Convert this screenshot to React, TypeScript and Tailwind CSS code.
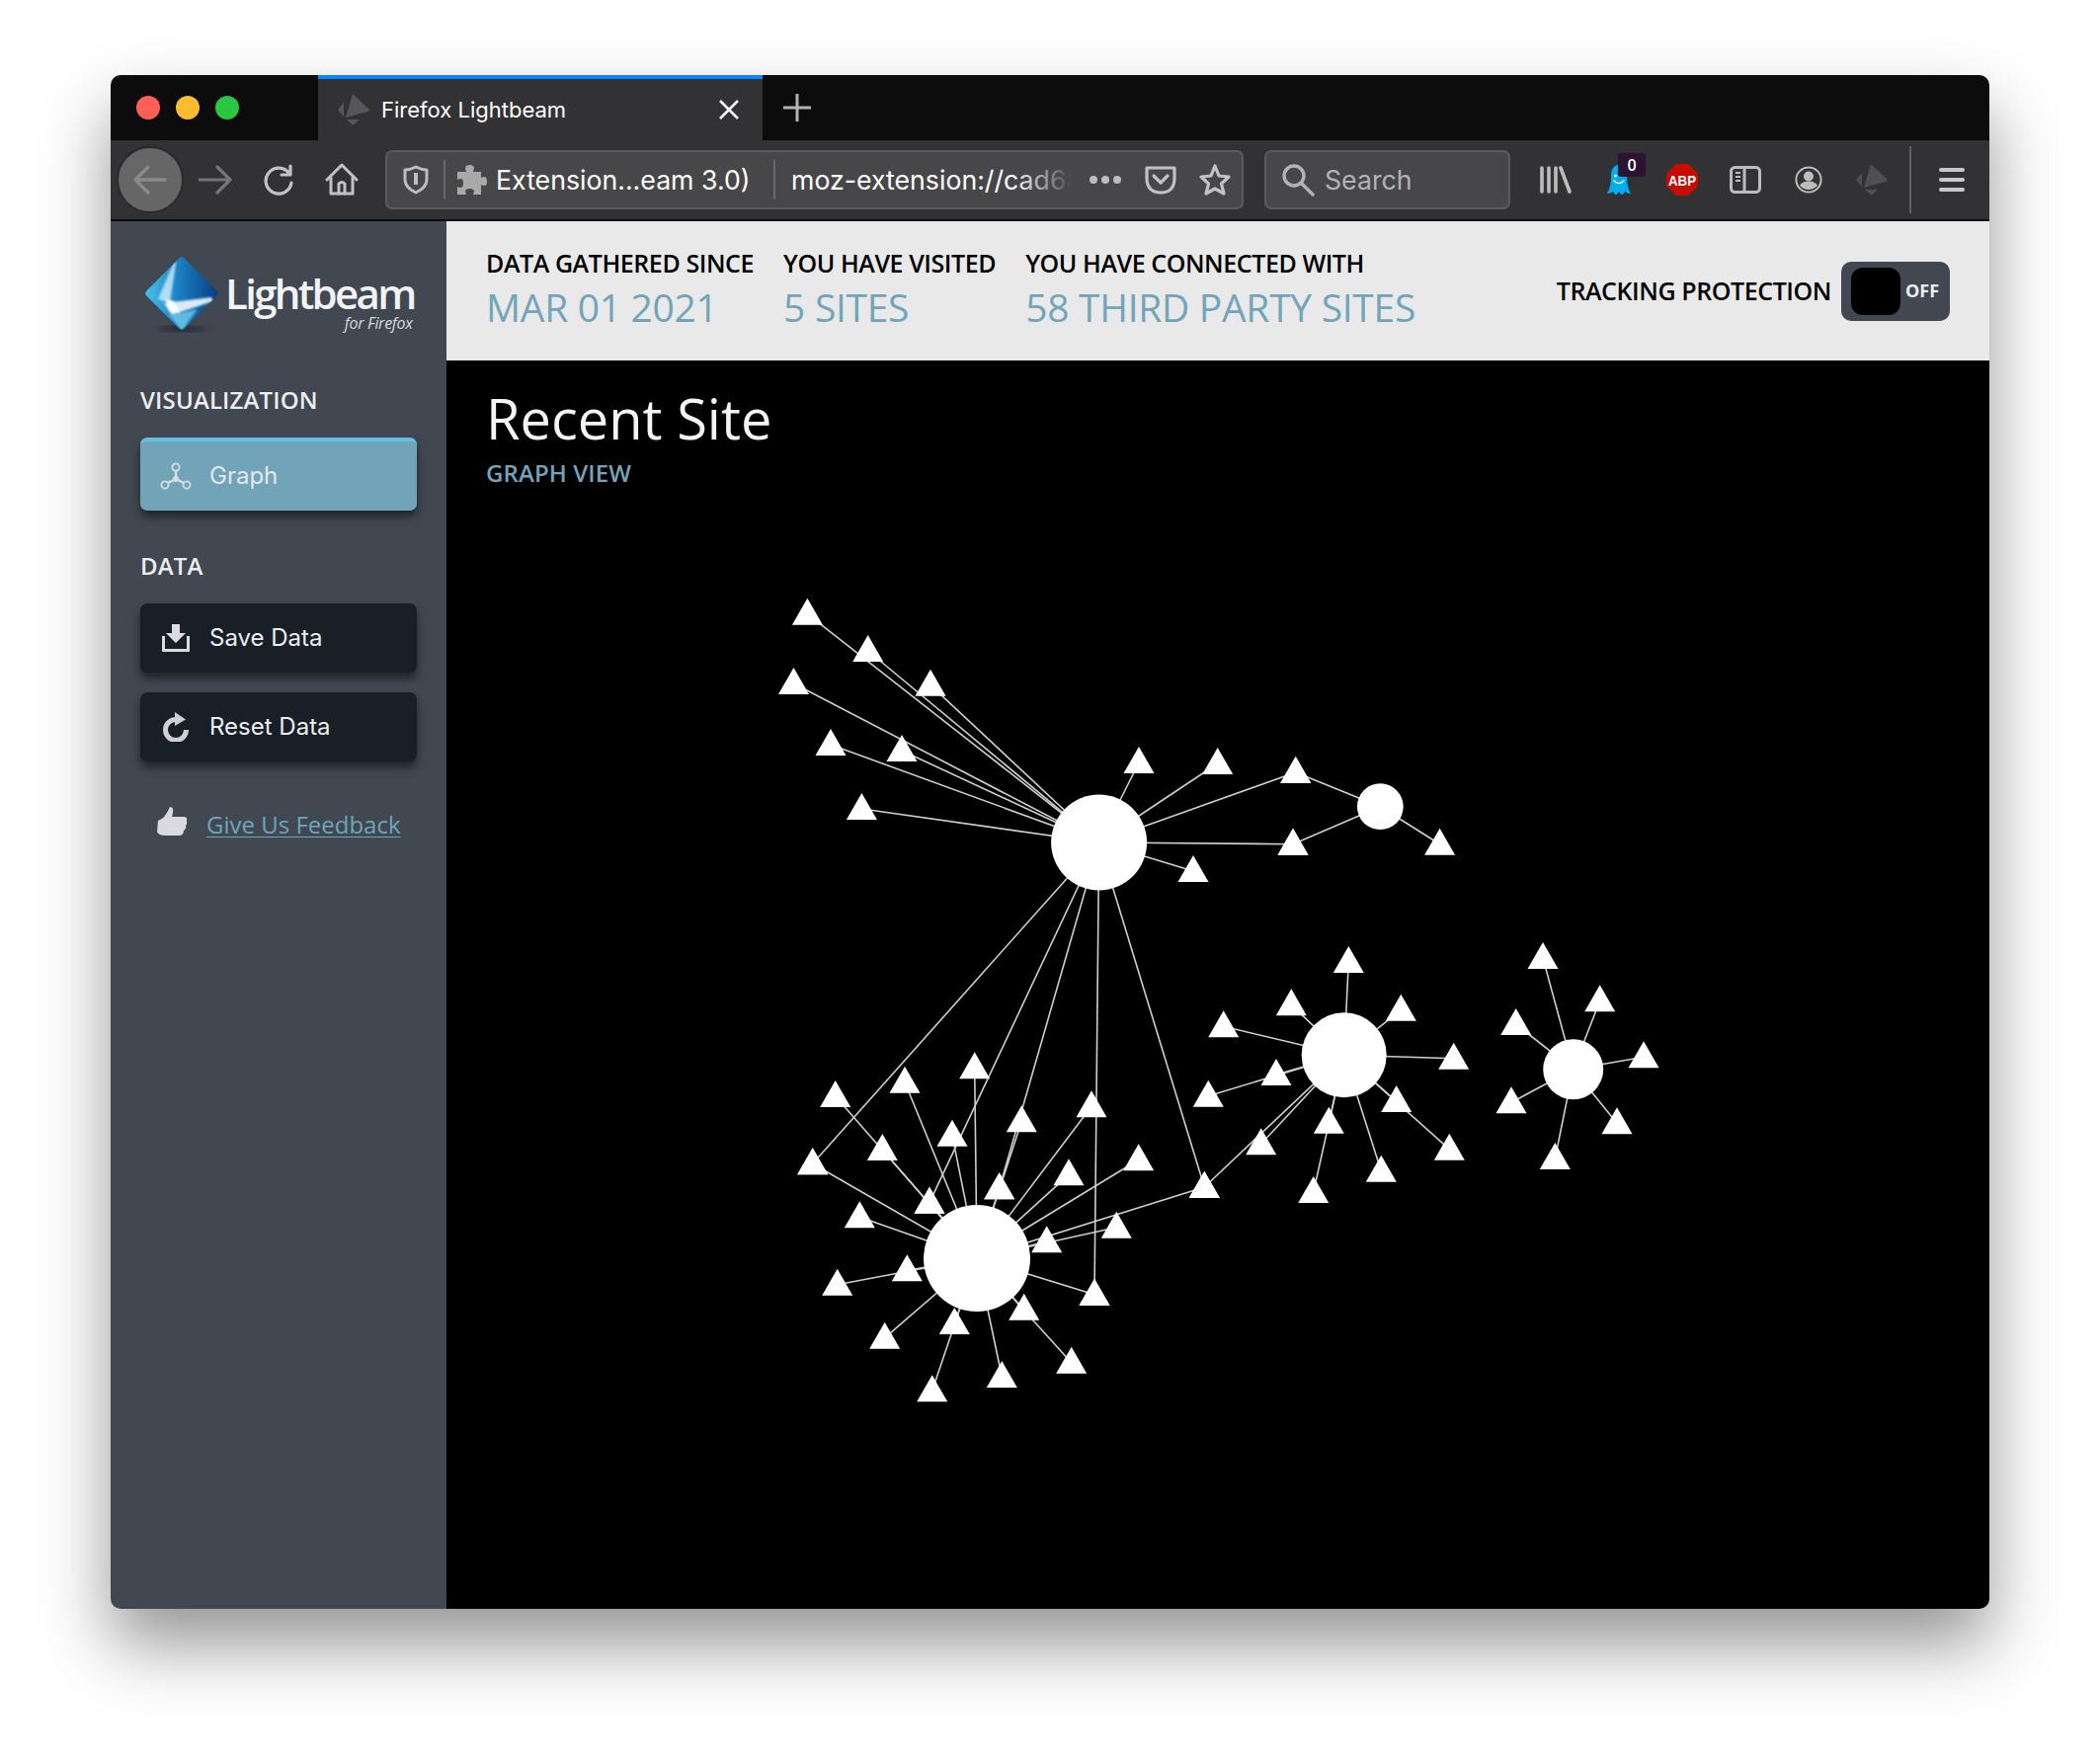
const nodesBig = [
  [817.4, 632.7], [878.7, 670], [942, 704.7], [803.5, 703], [841, 765], [913, 771], [872.4, 830],
  [1153, 783], [1232.7, 784], [1311.7, 793], [1309, 865.7], [1208, 893],
];
const nodesSmall = [[1311.7, 793], [1309, 865.7], [1457.6, 865.7]];
const nodesThree = [
  [986.7, 1092.3], [916, 1106.7], [845.7, 1121], [893.3, 1175], [822.7, 1189.3], [964, 1160.7],
  [1034.3, 1146.3], [1105, 1131.3], [1152.7, 1185.3], [1082, 1200.3], [1011.7, 1214.3], [941, 1228.7],
  [1219.3, 1213], [870.3, 1243.3], [1130.3, 1253.7], [1059.7, 1268.3], [918.3, 1297.3], [847.7, 1311.7],
  [1108, 1321.7], [1036.7, 1336.7], [895.7, 1365.7], [966.3, 1351], [1084.7, 1390.7], [1014.3, 1405],
  [943.7, 1419.3],
];
const nodesTwo = [
  [1365.3, 985], [1307.3, 1028.3], [1238.7, 1050.3], [1418.3, 1033.7], [1471.7, 1082.7], [1292, 1099],
  [1223.3, 1120.7], [1413.7, 1126], [1345.3, 1147.7], [1276.7, 1169.3], [1467.3, 1174.7], [1398.3, 1196.7],
  [1329.7, 1218], [1219.3, 1213],
];
const nodesFour = [
  [1562, 981], [1619.7, 1024.3], [1534.7, 1048], [1664, 1081.3], [1530, 1127.3], [1637, 1148.3], [1574.3, 1184],
];
// third party sites that the big hub shares with the lower cluster
const sharedBig = [[822.7, 1189.3], [941, 1228.7], [1011.7, 1214.3], [1108, 1321.7], [1219.3, 1213]];

const hubs = [
  { x: 1112.6, y: 853, r: 48.5, nodes: [...nodesBig, ...sharedBig] },
  { x: 1397.3, y: 816.7, r: 23.4, nodes: nodesSmall },
  { x: 989, y: 1274, r: 54, nodes: nodesThree },
  { x: 1360.7, y: 1068.3, r: 43, nodes: nodesTwo },
  { x: 1592.7, y: 1082.7, r: 30.5, nodes: nodesFour },
];

function Graph() {
  const all = hubs.flatMap((h) => h.nodes);
  return (
    <svg className="absolute inset-0 h-full w-full" viewBox="452 365 1562 1264">
      {hubs.map((h, i) =>
        h.nodes.map(([x, y], j) => (
          <line key={`${i}-${j}`} x1={h.x} y1={h.y} x2={x} y2={y - 11} stroke="#cfcfcf" strokeWidth="1.6" />
        )),
      )}
      {all.map(([x, y], i) => (
        <polygon key={i} points={`${x - 15.5},${y} ${x},${y - 27} ${x + 15.5},${y}`} fill="#fff" />
      ))}
      {hubs.map((h, i) => (
        <circle key={i} cx={h.x} cy={h.y} r={h.r} fill="#fff" />
      ))}
    </svg>
  );
}

function BeamIcon({ fill = "#565658", size = 32 }: { fill?: string; size?: number }) {
  return (
    <svg width={size} height={size} viewBox="0 0 32 32" fill={fill}>
      <path d="M15 0 L31 15 Q33 17 30 18 L8 24 Z" />
      <path d="M6 9 L6 23 L0 16 Z" />
      <path d="M9 26 L22 26 L15.5 32 Z" />
    </svg>
  );
}

function LogoMark() {
  return (
    <svg width="84" height="88" viewBox="0 0 84 88" className="shrink-0">
      <defs>
        <linearGradient id="lb" x1="0" y1="1" x2="1" y2="0">
          <stop offset="0" stopColor="#49c3ee" />
          <stop offset="0.45" stopColor="#1a82c4" />
          <stop offset="1" stopColor="#093a80" />
        </linearGradient>
        <filter id="soft"><feGaussianBlur stdDeviation="1.2" /></filter>
        <filter id="softer"><feGaussianBlur stdDeviation="3" /></filter>
        <clipPath id="dia"><rect x="15" y="15" width="54" height="54" rx="4" transform="rotate(45 42 42)" /></clipPath>
      </defs>
      <ellipse cx="42" cy="78" rx="24" ry="3" fill="#23282e" filter="url(#softer)" />
      <rect x="15" y="15" width="54" height="54" rx="4" transform="rotate(45 42 42)" fill="url(#lb)" />
      <g clipPath="url(#dia)">
        <path d="M35 8 L36 12 L30 52 L18 48 Z" fill="#dff2fb" opacity="0.75" filter="url(#soft)" />
        <path d="M24 52 L72 46 L74 50 L32 64 Z" fill="#eef9fd" opacity="0.9" filter="url(#soft)" />
        <path d="M26 48 L34 50 L40 62 L30 60 Z" fill="#ffffff" filter="url(#soft)" />
        <path d="M30 64 L58 58 L42 80 Z" fill="#7fd6f2" opacity="0.7" filter="url(#soft)" />
      </g>
    </svg>
  );
}

function Ghost() {
  return (
    <svg width="26" height="32" viewBox="0 0 26 32">
      <path d="M13 1 C6 1 5 8 5 13 C5 19 4 25 1 30 C4 30 5 29 7 28 C8 30 9 31 10 31 C11 31 12 29 13 28 C14 29 15 31 16 31 C17 31 18 30 19 28 C21 29 22 30 25 30 C22 25 21 19 21 13 C21 8 20 1 13 1 Z" fill="#00aef0" />
      <circle cx="9.5" cy="12" r="1.6" fill="#e8f8ff" />
      <path d="M8 17 Q13 22 18 17" stroke="#e8f8ff" strokeWidth="1.6" fill="none" strokeLinecap="round" />
    </svg>
  );
}

function Slot({ children, className = "" }: { children?: React.ReactNode; className?: string }) {
  return <div className={`relative flex h-[64px] w-[64px] shrink-0 items-center justify-center ${className}`}>{children}</div>;
}

function SideButton({ label, icon, active }: { label: string; icon: React.ReactNode; active?: boolean }) {
  const tone = active
    ? "border-t-4 border-[#66bfe2] bg-[#72a4b9] text-[#e4e7e9] h-[74px]"
    : "bg-[#181f27] text-[#eceef0] h-[70px]";
  return (
    <button className={`flex w-[280px] items-center rounded-[7px] shadow-[0_6px_8px_rgba(0,0,0,0.5)] font-['Inter',sans-serif] text-[24px] ${tone}`}>
      <span className="flex w-[70px] shrink-0 justify-center pl-[1px]">{icon}</span>
      <span>{label}</span>
    </button>
  );
}

function Stat({ label, value }: { label: string; value: string }) {
  return (
    <div>
      <div className="text-[25px] font-semibold leading-[30px] tracking-[-0.42px] text-black">{label}</div>
      <div className="mt-[5px] text-[39px] leading-[50px] tracking-[-0.3px] text-[#73a5ba]">{value}</div>
    </div>
  );
}

export default function App() {
  return (
    <div className="h-[1778px] w-[2126px] overflow-hidden bg-white pl-[112px] pt-[76px] font-['Open_Sans',sans-serif]">
      <div className="flex h-[1553px] w-[1902px] flex-col overflow-hidden rounded-[10px] shadow-[0_36px_70px_rgba(0,0,0,0.42)]">
        {/* tab strip */}
        <div className="flex h-[66px] shrink-0 items-stretch bg-[#0c0c0d]">
          <div className="flex w-[210px] items-center gap-[16px] pl-[26px]">
            <span className="h-[24px] w-[24px] rounded-full bg-[#ff5f57]" />
            <span className="h-[24px] w-[24px] rounded-full bg-[#febc2e]" />
            <span className="h-[24px] w-[24px] rounded-full bg-[#2ac840]" />
          </div>
          <div className="flex w-[450px] items-center border-t-4 border-[#0a84ff] bg-[#323234] pl-[20px] font-['Inter',sans-serif] text-[22px] text-white">
            <BeamIcon />
            <span className="ml-[12px] flex-1">Firefox Lightbeam</span>
            <svg width="22" height="22" viewBox="0 0 22 22" className="mr-[23px]">
              <path d="M2 2 L20 20 M20 2 L2 20" stroke="#f4f4f4" strokeWidth="2.6" />
            </svg>
          </div>
          <div className="flex w-[70px] items-center justify-center">
            <svg width="30" height="30" viewBox="0 0 30 30">
              <path d="M15 1 V29 M1 15 H29" stroke="#b4b4b6" strokeWidth="3" />
            </svg>
          </div>
        </div>
        {/* toolbar */}
        <div className="flex h-[80px] shrink-0 items-center border-b-2 border-[#0c0c0d] bg-[#323234] box-content">
          <div className="ml-[6px] flex h-[68px] w-[68px] items-center justify-center rounded-full border-2 border-[#2a2a2b] bg-[#666667]">
            <svg width="36" height="36" viewBox="0 0 36 36" fill="none" stroke="#8a8a8b" strokeWidth="3.4" strokeLinecap="round" strokeLinejoin="round">
              <path d="M33 18 H3 M16 5 L3 18 L16 31" />
            </svg>
          </div>
          <Slot>
            <svg width="34" height="36" viewBox="0 0 34 36" fill="none" stroke="#757576" strokeWidth="3.2" strokeLinecap="round" strokeLinejoin="round">
              <path d="M1 18 H32 M19 5 L32 18 L19 31" />
            </svg>
          </Slot>
          <Slot>
            <svg width="32" height="32" viewBox="0 0 32 32" fill="none" stroke="#c2c2c3" strokeWidth="3.2" strokeLinecap="round" strokeLinejoin="round">
              <path d="M27 10 A13 13 0 1 0 29 19" />
              <path d="M28 2 V11 H19" />
            </svg>
          </Slot>
          <Slot>
            <svg width="34" height="34" viewBox="0 0 34 34" fill="none" stroke="#c2c2c3" strokeWidth="3" strokeLinecap="round" strokeLinejoin="round">
              <path d="M2 17 L17 2 L32 17" />
              <path d="M6 15 V31 H28 V15" />
              <path d="M14 31 V21 Q17 18 20 21 V31" />
            </svg>
          </Slot>
          {/* url bar */}
          <div className="relative ml-[12px] flex h-[60px] w-[869px] items-center rounded-[7px] border-2 border-[#5b5b5d] bg-[#474749] text-white">
            <div className="flex h-full w-[57px] items-center justify-center">
              <svg width="26" height="30" viewBox="0 0 26 30" fill="none" stroke="#bdbdbe" strokeWidth="3" strokeLinejoin="round">
                <path d="M13 2 Q19 5 24 5 V15 Q24 23 13 28 Q2 23 2 15 V5 Q7 5 13 2 Z" />
                <path d="M13 8 V20" strokeWidth="4" />
              </svg>
            </div>
            <div className="h-[40px] w-[2px] bg-[#68686a]" />
            <svg width="34" height="34" viewBox="0 0 34 34" fill="#a9a9aa" className="ml-[10px]">
              <path d="M2 9 H11 Q8 2 14.5 2 Q21 2 18 9 H26 V15 Q32 12 32 19 Q32 25 26 22 V32 H18 Q21 26 14.5 26 Q8 26 11 32 H2 V24 Q8 27 8 20.5 Q8 14 2 17 Z" />
            </svg>
            <span className="ml-[7px] w-[281px] shrink-0 whitespace-nowrap font-['Inter',sans-serif] text-[26.7px]">Extension...eam 3.0)</span>
            <div className="h-[40px] w-[2px] bg-[#68686a]" />
            <div className="relative ml-[16px] w-[284px] shrink-0 overflow-hidden whitespace-nowrap font-['Inter',sans-serif] text-[26.7px]">
              moz-extension://cad68fa4
              <div className="absolute inset-y-0 right-0 w-[60px] bg-linear-to-r from-transparent to-[#474749]" />
            </div>
            <svg width="34" height="10" viewBox="0 0 34 10" fill="#bdbdbe" className="ml-[17px] shrink-0">
              <circle cx="5" cy="5" r="4" /><circle cx="17" cy="5" r="4" /><circle cx="29" cy="5" r="4" />
            </svg>
            <svg width="32" height="30" viewBox="0 0 32 30" fill="none" stroke="#c2c2c3" strokeWidth="3.2" strokeLinecap="round" strokeLinejoin="round" className="ml-[23px] shrink-0">
              <path d="M2 3 H30 V13 Q30 28 16 28 Q2 28 2 13 Z" />
              <path d="M9 11 L16 18 L23 11" />
            </svg>
            <svg width="32" height="32" viewBox="0 0 32 32" fill="none" stroke="#c2c2c3" strokeWidth="3.2" strokeLinejoin="round" className="ml-[23px] shrink-0">
              <path d="M16 2 L20 12 L30 13 L22.5 20 L25 30 L16 25 L7 30 L9.5 20 L2 13 L12 12 Z" />
            </svg>
          </div>
          {/* search */}
          <div className="ml-[21px] flex h-[60px] w-[249px] items-center rounded-[7px] border-2 border-[#5b5b5d] bg-[#474749] pl-[15px] font-['Inter',sans-serif] text-[26.7px] text-[#b3b3b4]">
            <svg width="34" height="34" viewBox="0 0 34 34" fill="none" stroke="#b3b3b4" strokeWidth="3.4" strokeLinecap="round">
              <circle cx="13" cy="13" r="10" />
              <path d="M21 21 L32 32" />
            </svg>
            <span className="ml-[10px]">Search</span>
          </div>
          {/* extension icons */}
          <Slot className="ml-[14px]">
            <svg width="32" height="28" viewBox="0 0 32 28" stroke="#bcbcbd" strokeWidth="3.6" strokeLinecap="round">
              <path d="M2 2 V26 M9 2 V26 M16 2 V26 M21 2 L30 26" />
            </svg>
          </Slot>
          <Slot>
            <Ghost />
            <span className="absolute left-[31px] top-[5px] flex h-[24px] w-[28px] items-center justify-center rounded-[3px] bg-[#2b1333] text-[16px] font-semibold text-white">0</span>
          </Slot>
          <Slot>
            <svg width="32" height="32" viewBox="0 0 32 32">
              <path d="M10 0 H22 L32 10 V22 L22 32 H10 L0 22 V10 Z" fill="#c70d00" />
              <text x="16" y="21.5" textAnchor="middle" textLength="28" lengthAdjust="spacingAndGlyphs" fontFamily="'Liberation Sans',sans-serif" fontWeight="700" fontSize="15" fill="#fff">ABP</text>
            </svg>
          </Slot>
          <Slot>
            <svg width="32" height="28" viewBox="0 0 32 28" fill="none" stroke="#bcbcbd" strokeWidth="3">
              <rect x="1.5" y="1.5" width="29" height="25" rx="4" />
              <path d="M15 2 V26" />
              <path d="M6 7 H11 M6 11 H11 M6 15 H11" strokeWidth="2" />
            </svg>
          </Slot>
          <Slot>
            <svg width="28" height="28" viewBox="0 0 28 28" fill="none">
              <circle cx="14" cy="14" r="12.6" stroke="#bcbcbd" strokeWidth="2" />
              <circle cx="14" cy="10.5" r="5" fill="#bcbcbd" />
              <path d="M5 20 Q7 15.5 14 15.5 Q21 15.5 23 20 Q19 24 14 24 Q9 24 5 20 Z" fill="#bcbcbd" />
            </svg>
          </Slot>
          <Slot><BeamIcon fill="#4f4f51" /></Slot>
          <div className="ml-[6px] h-[68px] w-[2px] bg-[#5f5f61]" />
          <Slot className="ml-[9px]">
            <svg width="26" height="26" viewBox="0 0 26 26" stroke="#c8c8c9" strokeWidth="4" strokeLinecap="round">
              <path d="M2 3 H24 M2 13 H24 M2 23 H24" />
            </svg>
          </Slot>
        </div>

        <div className="flex min-h-0 flex-1">
          {/* sidebar */}
          <aside className="w-[340px] shrink-0 bg-[#414851] px-[30px]">
            <div className="flex items-start pt-[31px]">
              <LogoMark />
              <div className="ml-[2px] mt-[16px] text-white">
                <div className="text-[42px] font-semibold leading-[52px] tracking-[-2.7px] text-[#f2f3f4]">Lightbeam</div>
                <div className="mr-[2px] mt-[-5px] text-right text-[16px] font-medium italic leading-[18px] tracking-[-0.3px] text-[#d8dadc]">for Firefox</div>
              </div>
            </div>
            <div className="mt-[47px] text-[24px] font-semibold leading-[30px] tracking-[0.15px] text-[#eceef0]">VISUALIZATION</div>
            <div className="mt-[23px]">
              <SideButton
                active
                label="Graph"
                icon={
                  <svg width="32" height="28" viewBox="0 0 32 28" fill="none" stroke="#d9dde0" strokeWidth="1.8">
                    <circle cx="16" cy="5" r="3.6" />
                    <circle cx="5" cy="23" r="3.6" />
                    <circle cx="27" cy="23" r="3.6" />
                    <path d="M16 9 V15 M8 21 L14 18 M24 21 L18 18" strokeWidth="2.4" />
                    <circle cx="16" cy="17" r="3" fill="#d9dde0" stroke="none" />
                  </svg>
                }
              />
            </div>
            <div className="mt-[41px] text-[24px] font-semibold leading-[30px] tracking-[0.15px] text-[#eceef0]">DATA</div>
            <div className="mt-[23px] flex flex-col gap-[20px]">
              <SideButton
                label="Save Data"
                icon={
                  <svg width="30" height="30" viewBox="0 0 30 30" fill="#dcdce0">
                    <path d="M11 1 H19 V10 H25 L15 20 L5 10 H11 Z" />
                    <path d="M1 13 H4 V26 H26 V13 H29 V28 Q29 29 28 29 H2 Q1 29 1 28 Z" />
                  </svg>
                }
              />
              <SideButton
                label="Reset Data"
                icon={
                  <svg width="28" height="30" viewBox="0 0 28 30" fill="none">
                    <path d="M24.5 18 A10.5 10.5 0 1 1 14 7.5" stroke="#d0d0d4" strokeWidth="5" />
                    <path d="M13 0 L24 7.5 L13 14 Z" fill="#d0d0d4" />
                  </svg>
                }
              />
            </div>
            <div className="mt-[46px] flex items-center pl-[17px]">
              <svg width="31" height="30" viewBox="0 0 31 30" fill="#d9d9de" className="mb-[6px]">
                <path d="M13 0 Q17 0 16 6 L15 10 H27 Q31 10 30 14 Q31 17 29 19 Q30 22 27 24 Q27 29 22 29 H9 Q1 29 0 25 L1 14 Q8 12 13 0 Z" />
              </svg>
              <a className="ml-[19px] text-[24px] leading-[30px] text-[#6ea6bc] underline decoration-1 underline-offset-[3px]">Give Us Feedback</a>
            </div>
          </aside>

          <div className="flex min-w-0 flex-1 flex-col">
            {/* stats header */}
            <header className="flex h-[141px] shrink-0 items-center bg-[#e9e9e9] pl-[40px] pr-[40px]">
              <div className="flex gap-[30px] self-start pt-[27px]">
                <Stat label="DATA GATHERED SINCE" value="MAR 01 2021" />
                <Stat label="YOU HAVE VISITED" value="5 SITES" />
                <Stat label="YOU HAVE CONNECTED WITH" value="58 THIRD PARTY SITES" />
              </div>
              <div className="ml-auto flex items-center gap-[10px]">
                <span className="text-[25px] font-semibold tracking-[-0.42px] text-black">TRACKING PROTECTION</span>
                <div className="flex h-[60px] w-[110px] items-center rounded-[10px] bg-[#414851] pl-[10px]">
                  <span className="h-[48px] w-[50px] rounded-[12px] bg-black" />
                  <span className="ml-[5px] text-[18px] font-bold text-[#eceef0]">OFF</span>
                </div>
              </div>
            </header>
            {/* graph area */}
            <main className="relative flex-1 bg-black pl-[40px] pt-[23px]">
              <Graph />
              <h1 className="relative text-[56px] leading-[70px] text-[#f4f4f4]">Recent Site</h1>
              <div className="relative mt-[6px] text-[24px] font-semibold leading-[30px] tracking-[0.1px] text-[#73a5ba]">GRAPH VIEW</div>
            </main>
          </div>
        </div>
      </div>
    </div>
  );
}
